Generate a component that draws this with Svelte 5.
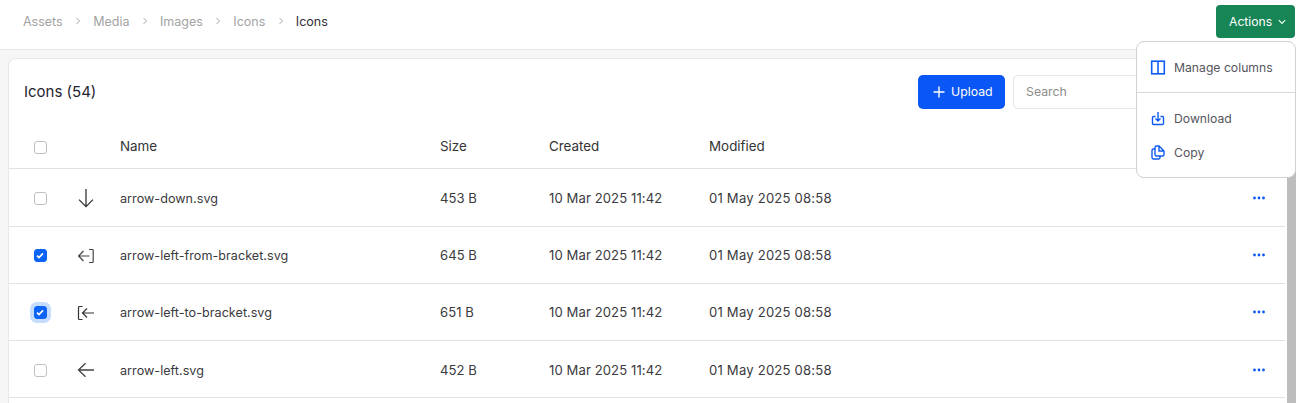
<script lang="ts">
const crumbs = ['Assets', 'Media', 'Images', 'Icons'];

const rows = [
  { name: 'arrow-down.svg', size: '453 B', icon: 'down', checked: false, focus: false },
  { name: 'arrow-left-from-bracket.svg', size: '645 B', icon: 'from', checked: true, focus: false },
  { name: 'arrow-left-to-bracket.svg', size: '651 B', icon: 'to', checked: true, focus: true },
  { name: 'arrow-left.svg', size: '452 B', icon: 'left', checked: false, focus: false },
];
</script>

<div class="page">
	<header class="topbar">
		<nav class="crumbs">
			{#each crumbs as crumb}
				<span class="crumb">{crumb}</span>
				<svg class="sep" width="6" height="8" viewBox="0 0 6 8" fill="none" stroke="currentColor" stroke-width="1"><path d="M1.5 1l3 3-3 3" /></svg>
			{/each}
			<span class="crumb current">Icons</span>
		</nav>
		<button type="button" class="actions">
			Actions
			<svg width="8" height="6" viewBox="0 0 8 6" fill="none" stroke="currentColor" stroke-width="1.1"><path d="M.8 1.2 4 4.4l3.2-3.2" /></svg>
		</button>
	</header>

	<div class="body">
		<main class="content">
			<section class="card">
				<div class="card-head">
					<h1>Icons (54)</h1>
					<div class="tools">
						<button type="button" class="upload">
							<svg width="12" height="12" viewBox="0 0 12 12" fill="none" stroke="currentColor" stroke-width="1.4"><path d="M6 .5v11M.5 6h11" /></svg>
							Upload
						</button>
						<input class="search" placeholder="Search" />
					</div>
				</div>

				<div class="row head">
					<div class="cell-check"><span class="box"></span></div>
					<div class="cell-icon"></div>
					<div class="cell-name">Name</div>
					<div class="cell-size">Size</div>
					<div class="cell-created">Created</div>
					<div class="cell-modified">Modified</div>
				</div>

				{#each rows as row}
					<div class="row item">
						<div class="cell-check">
							<span class="box" class:checked={row.checked} class:focus={row.focus}>
								{#if row.checked}
									<svg width="8" height="7" viewBox="0 0 8 7" fill="none" stroke="#fff" stroke-width="1.7"><path d="M1 3.6 3 5.5 7 1.4" /></svg>
								{/if}
							</span>
						</div>
						<div class="cell-icon">
							{#if row.icon === 'down'}
								<svg width="18" height="20" viewBox="0 0 18 20" fill="none" stroke="#333" stroke-width="1.3"><path d="M9 1v17.5M2 11.6l7 7 7-7" /></svg>
							{:else if row.icon === 'from'}
								<svg width="18" height="16" viewBox="0 0 18 16" fill="none" stroke="#444" stroke-width="1.2"><path d="M12.5 8H1.5M6.5 3l-5 5 5 5M12 1.5h3.2a1 1 0 0 1 1 1v11a1 1 0 0 1-1 1H12" /></svg>
							{:else if row.icon === 'to'}
								<svg width="18" height="16" viewBox="0 0 18 16" fill="none" stroke="#333" stroke-width="1.2"><path d="M17 8H5.500M10 3.500 5.500 8l4.500 4.500M5.500 1.500h-3a1 1 0 0 0-1 1v11a1 1 0 0 0 1 1h3" /></svg>
							{:else}
								<svg width="18" height="16" viewBox="0 0 18 16" fill="none" stroke="#444" stroke-width="1.3"><path d="M17 8H1.500M8.500 1.300 1.500 8l7 6.700" /></svg>
							{/if}
						</div>
						<div class="cell-name">{row.name}</div>
						<div class="cell-size">{row.size}</div>
						<div class="cell-created">10 Mar 2025 11:42</div>
						<div class="cell-modified">01 May 2025 08:58</div>
						<div class="cell-more">
							<svg width="12" height="4" viewBox="0 0 12 4" fill="#0b57f5"><circle cx="1.500" cy="2" r="1.400" /><circle cx="6" cy="2" r="1.400" /><circle cx="10.500" cy="2" r="1.400" /></svg>
						</div>
					</div>
				{/each}
			</section>
		</main>
		<div class="scrollbar"></div>
	</div>

	<div class="menu">
		<div class="menu-group">
			<div class="menu-item">
				<svg width="16" height="15" viewBox="0 0 16 15" fill="none" stroke="#0f5cf5" stroke-width="1.600"><rect x="1.700" y="1.200" width="12.600" height="12.600" /><path d="M8 1v13" /></svg>
				Manage columns
			</div>
		</div>
		<div class="menu-group">
			<div class="menu-item">
				<svg width="16" height="15" viewBox="0 0 16 15" fill="none" stroke="#0f5cf5" stroke-width="1.400"><path d="M5.500 5.500H3.500a1 1 0 0 0-1 1v6a1 1 0 0 0 1 1h9a1 1 0 0 0 1-1v-6a1 1 0 0 0-1-1h-2M8 1v8.500M5.500 7.500 8 10l2.500-2.500" /></svg>
				Download
			</div>
			<div class="menu-item">
				<svg width="16" height="15" viewBox="0 0 16 15" fill="none" stroke="#0f5cf5" stroke-width="1.400"><path d="M5 4H3.500A1.500 1.500 0 0 0 2 5.500v7A1.500 1.500 0 0 0 3.500 14h5a1.500 1.500 0 0 0 1.500-1.500V11M5 2.500A1.500 1.500 0 0 1 6.500 1H9l5 5v3.500a1.500 1.500 0 0 1-1.500 1.500h-6A1.500 1.500 0 0 1 5 9.500zM9 1v5h5" /></svg>
				Copy
			</div>
		</div>
	</div>
</div>

<style>
	:global(html), :global(body) {
		margin: 0;
		height: 100%;
		overflow: hidden;
	}

	.page {
		position: relative;
		height: 403px;
		overflow: hidden;
		background: #f6f6f6;
		font-family: Inter, "Liberation Sans", sans-serif;
		font-size: 13px;
		color: #2f2f33;
	}

	.topbar {
		display: flex;
		align-items: flex-start;
		justify-content: space-between;
		height: 49px;
		background: #fff;
		border-bottom: 1px solid #e4e4e4;
	}

	.crumbs {
		display: flex;
		align-items: center;
		height: 42px;
		padding-left: 23px;
		gap: 11.25px;
		font-size: 12.5px;
		color: #a3a3a3;
	}

	.crumb.current {
		color: #303034;
	}

	.sep {
		margin: 0 1px;
		color: #a8a8a8;
	}

	.actions {
		display: flex;
		align-items: center;
		gap: 6px;
		width: 79px;
		height: 33px;
		margin-top: 5px;
		margin-right: 1px;
		padding: 0 0 0 13px;
		border: none;
		border-radius: 4px;
		background: #178556;
		color: #fff;
		font: inherit;
		font-size: 12.2px;
	}

	.body {
		display: flex;
		height: 353px;
	}

	.content {
		flex: 1;
		padding: 8px 0 0 7.5px;
		min-width: 0;
	}

	.card {
		background: #fff;
		border: 1px solid #e8e8e8;
		border-right: none;
		border-bottom: none;
		border-radius: 8px 0 0 0;
		height: 100%;
		box-sizing: border-box;
	}

	.card-head {
		display: flex;
		align-items: center;
		justify-content: space-between;
		height: 65px;
		padding-left: 15.5px;
	}

	h1 {
		margin: 0;
		font-size: 15px;
		font-weight: 400;
		color: #1f2430;
	}

	.tools {
		display: flex;
		gap: 8px;
	}

	.upload {
		display: flex;
		align-items: center;
		gap: 6px;
		width: 87px;
		height: 34px;
		padding: 0 0 0 15px;
		border: none;
		border-radius: 5px;
		background: #0b57f5;
		color: #fff;
		font: inherit;
		font-size: 12.3px;
	}

	.search {
		width: 274px;
		height: 34px;
		box-sizing: border-box;
		padding: 0 12px;
		border: 1px solid #e6e6e6;
		border-radius: 5px;
		font: inherit;
		font-size: 12.3px;
	}

	.search::placeholder {
		color: #8c8c8c;
	}

	.row {
		display: flex;
		align-items: center;
		margin-right: 2px;
		border-bottom: 1px solid #e2e2e6;
	}

	.row.head {
		height: 44.3px;
		font-size: 13.4px;
		color: #333;
	}

	.head .cell-check {
		padding-top: 2px;
	}

	.row.item {
		height: 54.25px;
		padding-top: 2px;
		font-size: 13.1px;
		letter-spacing: 0.03px;
		color: #3a3a40;
	}

	.item .cell-size,
	.item .cell-created,
	.item .cell-modified,
	.item .cell-more {
		padding-bottom: 1px;
	}

	.cell-check {
		display: flex;
		justify-content: center;
		width: 63.5px;
	}

	.box {
		display: flex;
		align-items: center;
		justify-content: center;
		width: 11px;
		height: 11px;
		background: #fff;
		border: 1px solid #c0c0c0;
		border-radius: 3px;
	}

	.box.checked {
		background: #0b64f5;
		border-color: #0b64f5;
	}

	.box.focus {
		box-shadow: 0 0 0 4px #c5dcfd;
	}

	.cell-icon {
		display: flex;
		justify-content: center;
		width: 27px;
		margin-right: 21px;
	}

	.cell-name {
		width: 320px;
	}

	.item .cell-name {
		font-size: 12.6px;
	}

	.cell-size {
		width: 109px;
	}

	.cell-created {
		width: 160px;
	}

	.item .cell-created {
		letter-spacing: 0.09px;
	}

	.cell-modified {
		flex: 1;
	}

	.item .cell-modified {
		letter-spacing: 0.2px;
	}

	.cell-more {
		display: flex;
		margin-right: 20px;
	}

	.scrollbar {
		width: 9px;
		background: #bdbdbd;
	}

	.menu {
		position: absolute;
		top: 41px;
		right: 0;
		width: 158px;
		height: 135px;
		background: #fff;
		border: 1px solid #d2d2d2;
		border-radius: 8px;
		color: #55555c;
		font-size: 12.2px;
	}

	.menu-group {
		padding: 8px 0;
	}

	.menu-group + .menu-group {
		border-top: 1px solid #d8d8d8;
	}

	.menu-item {
		display: flex;
		align-items: center;
		gap: 8px;
		height: 34px;
		padding-left: 13px;
	}
</style>
